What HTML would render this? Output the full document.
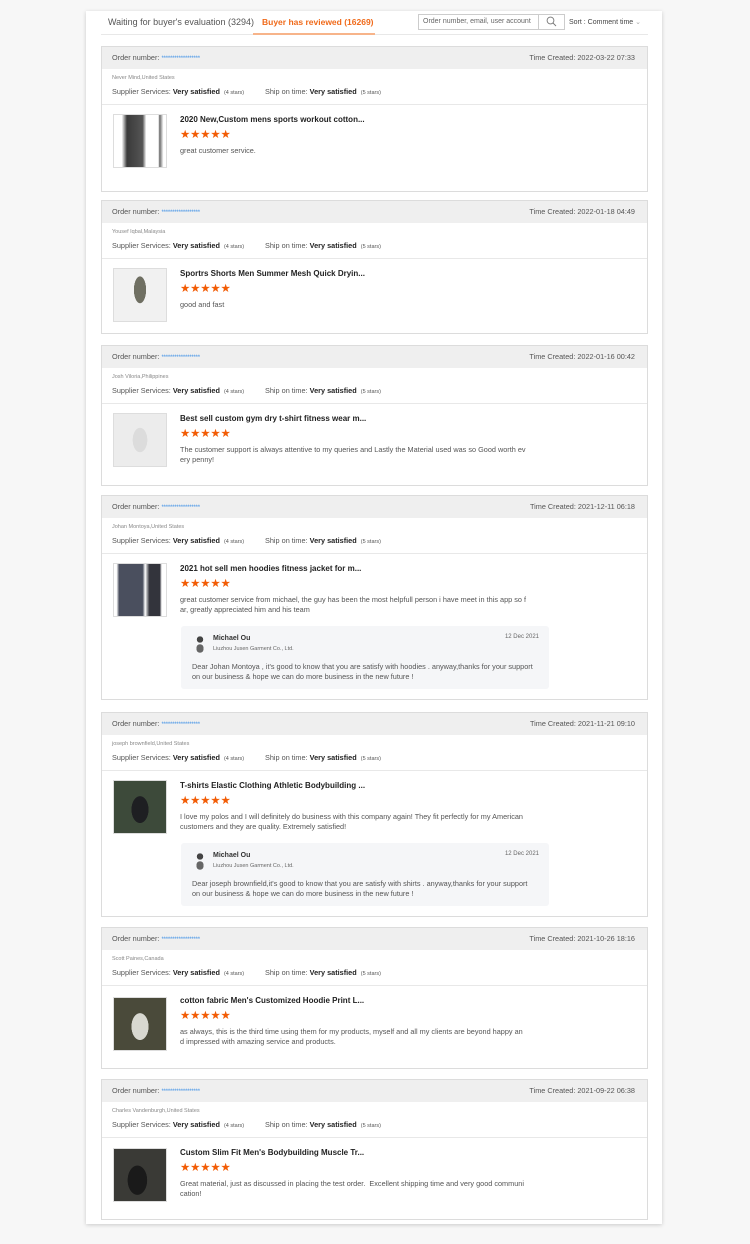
<!DOCTYPE html>
<html><head><meta charset="utf-8"><style>
*{margin:0;padding:0;box-sizing:border-box}
body{width:750px;height:1244px;background:#f7f7f7;font-family:"Liberation Sans",sans-serif;position:relative;overflow:hidden;color:#555}
.panel{position:absolute;left:86px;top:11px;width:576px;height:1213px;background:#fff;box-shadow:0 1px 4px rgba(0,0,0,.18)}
.a{position:absolute;white-space:nowrap;line-height:1}
.card{position:absolute;left:101px;width:547px;border:1px solid #dcdcdc;background:#fff}
.hd{position:absolute;left:0;top:0;right:0;height:22px;background:#efefef}
.sep{position:absolute;left:0;right:0;height:1px;background:#e8e8e8}
.img{position:absolute;left:11px;width:54px;height:54px;border:1px solid #ddd}
.t7{font-size:7.3px;color:#555}
.t6{font-size:5.5px;color:#888}
.b{color:#222;font-weight:bold}
.title{font-size:8px;font-weight:bold;color:#222}
.stars{font-size:11.5px;color:#f25c05;letter-spacing:-0.2px}
.rep{position:absolute;left:79px;width:368px;height:63px;background:#f5f6f8;border-radius:3px}
.blue{color:#3a8ee6;font-size:6px;letter-spacing:-0.2px}
</style></head><body>
<div class="panel"></div>
<div class="a" style="left:108px;top:18px;font-size:9px;color:#555">Waiting for buyer's evaluation (3294)</div>
<div class="a" style="left:262px;top:18px;font-size:8.5px;color:#f06a1a;font-weight:bold">Buyer has reviewed (16269)</div>
<div style="position:absolute;left:101px;top:34px;width:547px;height:1px;background:#e8e8e8"></div>
<div style="position:absolute;left:253px;top:33px;width:122px;height:2px;background:#f7b48a"></div>
<div style="position:absolute;left:418px;top:14px;width:147px;height:16px;border:1px solid #ccc;background:#fff"></div>
<div style="position:absolute;left:538px;top:14px;width:1px;height:16px;background:#ccc"></div>
<div class="a" style="left:423px;top:18px;font-size:7px;color:#666">Order number, email, user account</div>
<svg style="position:absolute;left:546px;top:16px" width="11" height="11" viewBox="0 0 11 11"><circle cx="4.5" cy="4.5" r="3.4" fill="none" stroke="#777" stroke-width="0.9"/><path d="M7 7L10 10" stroke="#777" stroke-width="0.9"/></svg>
<div class="a" style="left:569px;top:19px;font-size:7px;color:#444">Sort : Comment time <span style="color:#aaa">&#8964;</span></div>

<!-- card 1 -->
<div class="card" style="top:46px;height:146px">
<div class="hd"></div>
<div class="a t7" style="left:10px;top:7px">Order number: <span class="blue">******************</span></div>
<div class="a t7" style="right:12px;top:7px">Time Created: 2022-03-22 07:33</div>
<div class="a t6" style="left:10px;top:29px">Never Mind,United States</div>
<div class="a t7" style="left:10px;top:41px">Supplier Services: <span class="b">Very satisfied</span> &nbsp;<span style="font-size:5.5px">(4 stars)</span></div>
<div class="a t7" style="left:163px;top:41px">Ship on time: <span class="b">Very satisfied</span> &nbsp;<span style="font-size:5.5px">(5 stars)</span></div>
<div class="sep" style="top:57px"></div>
<div class="img" style="top:67px;background:linear-gradient(90deg,#fff 15%,#3a3a3a 25%,#555 55%,#fff 62%,#fff 85%,#6a6a6a 88%,#fff 95%)"></div>
<div class="a title" style="left:78px;top:69px">2020 New,Custom mens sports workout cotton...</div>
<div class="a stars" style="left:78px;top:83px">★★★★★</div>
<div class="a t7" style="left:78px;top:100px">great customer service.</div>
</div>

<!-- card 2 -->
<div class="card" style="top:200px;height:134px">
<div class="hd"></div>
<div class="a t7" style="left:10px;top:7px">Order number: <span class="blue">******************</span></div>
<div class="a t7" style="right:12px;top:7px">Time Created: 2022-01-18 04:49</div>
<div class="a t6" style="left:10px;top:29px">Yousef Iqbal,Malaysia</div>
<div class="a t7" style="left:10px;top:41px">Supplier Services: <span class="b">Very satisfied</span> &nbsp;<span style="font-size:5.5px">(4 stars)</span></div>
<div class="a t7" style="left:163px;top:41px">Ship on time: <span class="b">Very satisfied</span> &nbsp;<span style="font-size:5.5px">(5 stars)</span></div>
<div class="sep" style="top:57px"></div>
<div class="img" style="top:67px;background:radial-gradient(ellipse 10px 22px at 50% 40%,#6f6f62 60%,transparent 62%),#f1f1f1"></div>
<div class="a title" style="left:78px;top:69px">Sportrs Shorts Men Summer Mesh Quick Dryin...</div>
<div class="a stars" style="left:78px;top:83px">★★★★★</div>
<div class="a t7" style="left:78px;top:100px">good and fast</div>
</div>

<!-- card 3 -->
<div class="card" style="top:345px;height:141px">
<div class="hd"></div>
<div class="a t7" style="left:10px;top:7px">Order number: <span class="blue">******************</span></div>
<div class="a t7" style="right:12px;top:7px">Time Created: 2022-01-16 00:42</div>
<div class="a t6" style="left:10px;top:29px">Josh Viloria,Philippines</div>
<div class="a t7" style="left:10px;top:41px">Supplier Services: <span class="b">Very satisfied</span> &nbsp;<span style="font-size:5.5px">(4 stars)</span></div>
<div class="a t7" style="left:163px;top:41px">Ship on time: <span class="b">Very satisfied</span> &nbsp;<span style="font-size:5.5px">(5 stars)</span></div>
<div class="sep" style="top:57px"></div>
<div class="img" style="top:67px;background:radial-gradient(ellipse 12px 20px at 50% 50%,#dcdcdc 60%,transparent 62%),#ececec"></div>
<div class="a title" style="left:78px;top:69px">Best sell custom gym dry t-shirt fitness wear m...</div>
<div class="a stars" style="left:78px;top:83px">★★★★★</div>
<div class="a t7" style="left:78px;top:100px">The customer support is always attentive to my queries and Lastly the Material used was so Good worth ev</div>
<div class="a t7" style="left:78px;top:110px">ery penny!</div>
</div>

<!-- card 4 -->
<div class="card" style="top:495px;height:205px">
<div class="hd"></div>
<div class="a t7" style="left:10px;top:7px">Order number: <span class="blue">******************</span></div>
<div class="a t7" style="right:12px;top:7px">Time Created: 2021-12-11 06:18</div>
<div class="a t6" style="left:10px;top:29px">Johan Montoya,United States</div>
<div class="a t7" style="left:10px;top:41px">Supplier Services: <span class="b">Very satisfied</span> &nbsp;<span style="font-size:5.5px">(4 stars)</span></div>
<div class="a t7" style="left:163px;top:41px">Ship on time: <span class="b">Very satisfied</span> &nbsp;<span style="font-size:5.5px">(5 stars)</span></div>
<div class="sep" style="top:57px"></div>
<div class="img" style="top:67px;background:linear-gradient(90deg,#fff 5%,#4a4f5e 10%,#4a4f5e 55%,#fff 60%,#33343c 68%,#33343c 88%,#fff 92%)"></div>
<div class="a title" style="left:78px;top:69px">2021 hot sell men hoodies fitness jacket for m...</div>
<div class="a stars" style="left:78px;top:83px">★★★★★</div>
<div class="a t7" style="left:78px;top:100px">great customer service from michael, the guy has been the most helpfull person i have meet in this app so f</div>
<div class="a t7" style="left:78px;top:110px">ar, greatly appreciated him and his team</div>
<div class="rep" style="top:130px">
<div style="position:absolute;left:12px;top:9px;width:14px;height:18px;background:radial-gradient(circle at 50% 25%,#444 20%,transparent 22%),radial-gradient(ellipse 6px 7px at 50% 75%,#666 60%,transparent 62%)"></div>
<div class="a" style="left:32px;top:9px;font-size:7px;color:#333;font-weight:bold">Michael Ou</div>
<div class="a" style="left:32px;top:21px;font-size:5.5px;color:#666">Liuzhou Jusen Garment Co., Ltd.</div>
<div class="a" style="right:10px;top:8px;font-size:6px;color:#666">12 Dec 2021</div>
<div class="a t7" style="left:11px;top:37px">Dear Johan Montoya , it's good to know that you are satisfy with hoodies . anyway,thanks for your support</div>
<div class="a t7" style="left:11px;top:47px">on our business &amp; hope we can do more business in the new future !</div>
</div>
</div>

<!-- card 5 -->
<div class="card" style="top:712px;height:205px">
<div class="hd"></div>
<div class="a t7" style="left:10px;top:7px">Order number: <span class="blue">******************</span></div>
<div class="a t7" style="right:12px;top:7px">Time Created: 2021-11-21 09:10</div>
<div class="a t6" style="left:10px;top:29px">joseph brownfield,United States</div>
<div class="a t7" style="left:10px;top:41px">Supplier Services: <span class="b">Very satisfied</span> &nbsp;<span style="font-size:5.5px">(4 stars)</span></div>
<div class="a t7" style="left:163px;top:41px">Ship on time: <span class="b">Very satisfied</span> &nbsp;<span style="font-size:5.5px">(5 stars)</span></div>
<div class="sep" style="top:57px"></div>
<div class="img" style="top:67px;background:radial-gradient(ellipse 14px 22px at 50% 55%,#1e1f22 60%,transparent 62%),#3d4a3a"></div>
<div class="a title" style="left:78px;top:69px">T-shirts Elastic Clothing Athletic Bodybuilding ...</div>
<div class="a stars" style="left:78px;top:83px">★★★★★</div>
<div class="a t7" style="left:78px;top:100px">I love my polos and I will definitely do business with this company again! They fit perfectly for my American</div>
<div class="a t7" style="left:78px;top:110px">customers and they are quality. Extremely satisfied!</div>
<div class="rep" style="top:130px">
<div style="position:absolute;left:12px;top:9px;width:14px;height:18px;background:radial-gradient(circle at 50% 25%,#444 20%,transparent 22%),radial-gradient(ellipse 6px 7px at 50% 75%,#666 60%,transparent 62%)"></div>
<div class="a" style="left:32px;top:9px;font-size:7px;color:#333;font-weight:bold">Michael Ou</div>
<div class="a" style="left:32px;top:21px;font-size:5.5px;color:#666">Liuzhou Jusen Garment Co., Ltd.</div>
<div class="a" style="right:10px;top:8px;font-size:6px;color:#666">12 Dec 2021</div>
<div class="a t7" style="left:11px;top:37px">Dear joseph brownfield,it's good to know that you are satisfy with shirts . anyway,thanks for your support</div>
<div class="a t7" style="left:11px;top:47px">on our business &amp; hope we can do more business in the new future !</div>
</div>
</div>

<!-- card 6 -->
<div class="card" style="top:927px;height:142px">
<div class="hd"></div>
<div class="a t7" style="left:10px;top:7px">Order number: <span class="blue">******************</span></div>
<div class="a t7" style="right:12px;top:7px">Time Created: 2021-10-26 18:16</div>
<div class="a t6" style="left:10px;top:29px">Scott Paines,Canada</div>
<div class="a t7" style="left:10px;top:41px">Supplier Services: <span class="b">Very satisfied</span> &nbsp;<span style="font-size:5.5px">(4 stars)</span></div>
<div class="a t7" style="left:163px;top:41px">Ship on time: <span class="b">Very satisfied</span> &nbsp;<span style="font-size:5.5px">(5 stars)</span></div>
<div class="sep" style="top:57px"></div>
<div class="img" style="top:69px;background:radial-gradient(ellipse 14px 22px at 50% 55%,#d8d8d0 60%,transparent 62%),#4a4a3a"></div>
<div class="a title" style="left:78px;top:69px">cotton fabric Men's Customized Hoodie Print L...</div>
<div class="a stars" style="left:78px;top:83px">★★★★★</div>
<div class="a t7" style="left:78px;top:100px">as always, this is the third time using them for my products, myself and all my clients are beyond happy an</div>
<div class="a t7" style="left:78px;top:110px">d impressed with amazing service and products.</div>
</div>

<!-- card 7 -->
<div class="card" style="top:1079px;height:141px">
<div class="hd"></div>
<div class="a t7" style="left:10px;top:7px">Order number: <span class="blue">******************</span></div>
<div class="a t7" style="right:12px;top:7px">Time Created: 2021-09-22 06:38</div>
<div class="a t6" style="left:10px;top:29px">Charles Vandenburgh,United States</div>
<div class="a t7" style="left:10px;top:41px">Supplier Services: <span class="b">Very satisfied</span> &nbsp;<span style="font-size:5.5px">(4 stars)</span></div>
<div class="a t7" style="left:163px;top:41px">Ship on time: <span class="b">Very satisfied</span> &nbsp;<span style="font-size:5.5px">(5 stars)</span></div>
<div class="sep" style="top:57px"></div>
<div class="img" style="top:68px;background:radial-gradient(ellipse 16px 24px at 45% 60%,#1a1a1a 60%,transparent 62%),#3a3a36"></div>
<div class="a title" style="left:78px;top:69px">Custom Slim Fit Men's Bodybuilding Muscle Tr...</div>
<div class="a stars" style="left:78px;top:83px">★★★★★</div>
<div class="a t7" style="left:78px;top:100px">Great material, just as discussed in placing the test order.&nbsp; Excellent shipping time and very good communi</div>
<div class="a t7" style="left:78px;top:110px">cation!</div>
</div>
</body></html>
